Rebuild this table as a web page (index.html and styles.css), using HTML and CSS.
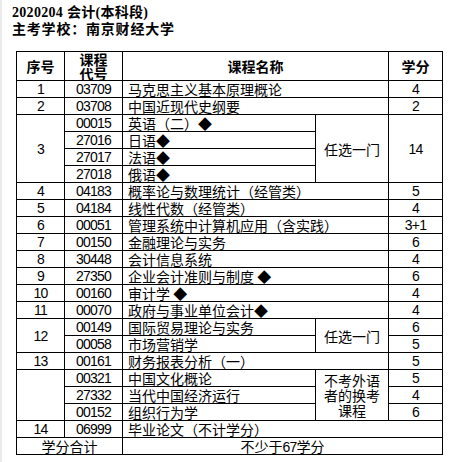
FILE: index.html
```html
<!DOCTYPE html>
<html lang="zh-CN">
<head>
<meta charset="utf-8">
<title>2020204 会计(本科段)</title>
<link rel="stylesheet" href="styles.css">
</head>
<body>
<div class="page">
  <div class="title">
    <div class="t1">2020204 会计(本科段)</div>
    <div class="t2">主考学校：南京财经大学</div>
  </div>
  <table class="plan">
    <colgroup><col class="c1"><col class="c2"><col class="c3"><col class="c4"><col class="c5"></colgroup>
    <thead>
      <tr class="head"><th>序号</th><th class="codeh">课程<br>代号</th><th colspan="2">课程名称</th><th>学分</th></tr>
    </thead>
    <tbody>
      <tr><td class="num">1</td><td class="num">03709</td><td class="name" colspan="2">马克思主义基本原理概论</td><td class="num">4</td></tr>
      <tr><td class="num">2</td><td class="num">03708</td><td class="name" colspan="2">中国近现代史纲要</td><td class="num">2</td></tr>
      <tr><td class="num" rowspan="4">3</td><td class="num">00015</td><td class="name">英语（二）◆</td><td class="note" rowspan="4">任选一门</td><td class="num" rowspan="4">14</td></tr>
      <tr><td class="num">27016</td><td class="name">日语◆</td></tr>
      <tr><td class="num">27017</td><td class="name">法语◆</td></tr>
      <tr><td class="num">27018</td><td class="name">俄语◆</td></tr>
      <tr><td class="num">4</td><td class="num">04183</td><td class="name" colspan="2">概率论与数理统计（经管类）</td><td class="num">5</td></tr>
      <tr><td class="num">5</td><td class="num">04184</td><td class="name" colspan="2">线性代数（经管类）</td><td class="num">4</td></tr>
      <tr><td class="num">6</td><td class="num">00051</td><td class="name" colspan="2">管理系统中计算机应用（含实践）</td><td class="num">3+1</td></tr>
      <tr><td class="num">7</td><td class="num">00150</td><td class="name" colspan="2">金融理论与实务</td><td class="num">6</td></tr>
      <tr><td class="num">8</td><td class="num">30448</td><td class="name" colspan="2">会计信息系统</td><td class="num">4</td></tr>
      <tr><td class="num">9</td><td class="num">27350</td><td class="name" colspan="2">企业会计准则与制度 ◆</td><td class="num">6</td></tr>
      <tr><td class="num">10</td><td class="num">00160</td><td class="name" colspan="2">审计学 ◆</td><td class="num">4</td></tr>
      <tr><td class="num">11</td><td class="num">00070</td><td class="name" colspan="2">政府与事业单位会计◆</td><td class="num">4</td></tr>
      <tr><td class="num" rowspan="2">12</td><td class="num">00149</td><td class="name">国际贸易理论与实务</td><td class="note" rowspan="2">任选一门</td><td class="num">6</td></tr>
      <tr><td class="num">00058</td><td class="name">市场营销学</td><td class="num">5</td></tr>
      <tr><td class="num">13</td><td class="num">00161</td><td class="name" colspan="2">财务报表分析（一）</td><td class="num">5</td></tr>
      <tr><td rowspan="3"></td><td class="num">00321</td><td class="name">中国文化概论</td><td class="note wrap" rowspan="3">不考外语者的换考课程</td><td class="num">5</td></tr>
      <tr><td class="num">27332</td><td class="name">当代中国经济运行</td><td class="num">4</td></tr>
      <tr><td class="num">00152</td><td class="name">组织行为学</td><td class="num">6</td></tr>
      <tr><td class="num">14</td><td class="num">06999</td><td class="name" colspan="3">毕业论文（不计学分）</td></tr>
      <tr><td colspan="2">学分合计</td><td colspan="3">不少于<span class="num">67</span>学分</td></tr>
    </tbody>
  </table>
</div>
</body>
</html>
```

FILE: styles.css
```css
* { box-sizing: border-box; }
html, body { margin: 0; padding: 0; background: #fff; }
body {
  font-family: "Noto Sans CJK SC", sans-serif;
  color: #000;
}
.page {
  border-left: 2px solid #ebebeb;
  min-height: 462px;
  padding: 4px 0 0 10px;
}
.title {
  font-family: "Liberation Serif", "Noto Sans CJK SC", serif;
  font-weight: bold;
  font-size: 14px;
  line-height: 17px;
}
.t1 { letter-spacing: 0.3px; }
.t2 { letter-spacing: 0.8px; }
.plan {
  margin: 13px 0 0 4px;
  border-collapse: separate;
  border-spacing: 0;
  border-top: 1px solid #000;
  border-left: 1px solid #000;
  table-layout: fixed;
  width: 427px;
}
.c1 { width: 48px; }
.c2 { width: 58px; }
.c3 { width: 193px; }
.c4 { width: 73px; }
.c5 { width: 54px; }
.plan th, .plan td {
  border-right: 1px solid #000;
  border-bottom: 1px solid #000;
  padding: 0;
  font-size: 14px;
  line-height: 16px;
  height: 17px;
  text-align: center;
  white-space: nowrap;
}
.plan th {
  font-weight: bold;
  height: 29px;
}
.plan th.codeh { line-height: 14px; }
.num {
  font-family: "Liberation Sans", sans-serif;
  letter-spacing: -0.8px;
}
.plan td span.num { line-height: 12px; }
.plan td.name { text-align: left; padding-left: 5px; }
.plan td.wrap {
  white-space: normal;
  line-height: 15px;
  padding: 0 8px;
}
```
